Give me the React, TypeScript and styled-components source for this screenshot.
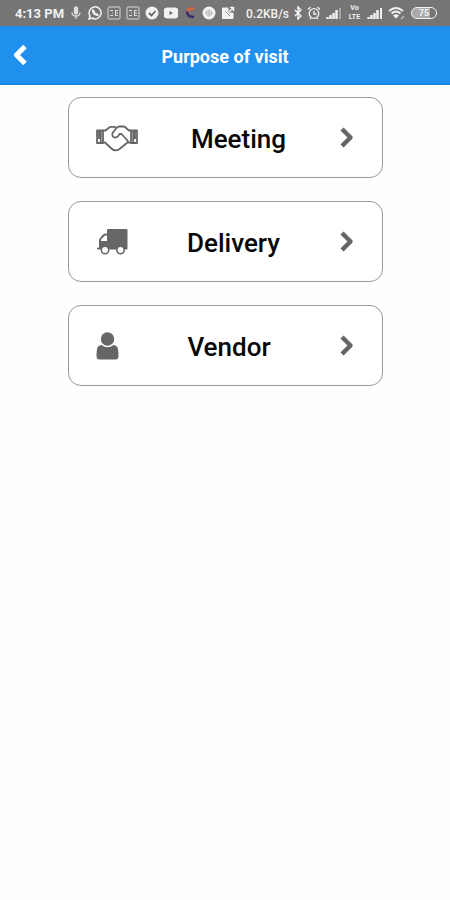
import React from "react";
import styled, { createGlobalStyle } from "styled-components";

const Global = createGlobalStyle`
  * { box-sizing: border-box; }
  body { margin: 0; background: #fefefe; font-family: Roboto, "Liberation Sans", sans-serif; }
`;

const StatusBar = styled.div`
  display: flex;
  align-items: center;
  justify-content: space-between;
  height: 26px;
  padding: 0 13px 0 15px;
  background: #757575;
  color: #f2f2f2;
  white-space: nowrap;
`;

const StatusGroup = styled.div<{ $gap: number }>`
  display: flex;
  align-items: center;
  gap: ${(p) => p.$gap}px;
`;

const StatusText = styled.span<{ $size: number; $weight: number }>`
  padding-top: 1px;
  font-size: ${(p) => p.$size}px;
  font-weight: ${(p) => p.$weight};
  line-height: 16px;
`;

const Glyph = styled.svg`
  display: block;
  flex: none;
  fill: none;
  stroke: currentColor;
`;

const VolteBadge = styled.span`
  display: flex;
  flex-direction: column;
  width: 15px;
  font-size: 7px;
  font-weight: 700;
  line-height: 9px;
  text-align: center;
`;

const Battery = styled.span`
  width: 26px;
  height: 12px;
  border: 1px solid #f2f2f2;
  border-radius: 6px;
  background: linear-gradient(to right, #aaa 75%, #757575 75%);
  font-size: 9px;
  font-weight: 700;
  line-height: 10px;
  text-align: center;
`;

const Header = styled.header`
  display: grid;
  grid-template-columns: 40px 1fr 40px;
  align-items: center;
  height: 59px;
  background: #1f90ee;
  border-bottom: 1px solid #1580dc;
  color: #fff;
`;

const BackButton = styled.button`
  display: flex;
  justify-content: center;
  padding: 8px 0;
  border: 0;
  background: none;
  color: inherit;
  cursor: pointer;
`;

const Title = styled.h1`
  margin: 0;
  padding-top: 3px;
  font-size: 18px;
  font-weight: 700;
  line-height: 24px;
  text-align: center;
`;

const Options = styled.main`
  display: flex;
  flex-direction: column;
  gap: 23px;
  width: 70%;
  margin: 12px auto;
`;

const OptionButton = styled.button`
  display: flex;
  align-items: center;
  justify-content: space-between;
  height: 81px;
  padding: 0 28px 0 27px;
  border: 1px solid #999;
  border-radius: 13px;
  background: #fff;
  color: #666;
  font-family: inherit;
  cursor: pointer;
`;

const Label = styled.span`
  padding-top: 2px;
  color: #080808;
  font-size: 26px;
  font-weight: 500;
  line-height: 32px;
`;

const Handshake = () => (
  <Glyph width="42" height="28" viewBox="0 0 42 28" strokeWidth="1.8" strokeLinejoin="round" aria-hidden="true">
    <path d="M1 6.500H7V19H1ZM41 6.500H35V19H41Z" />
    <path d="M3 7V15M4.800 7V18M37.200 7V18M39 7V15" strokeWidth="1.8" />
    <path d="M7 6.500H9.500L13.500 3.300Q14 2.800 15 2.800H18.500L20.500 4L22 3Q22.500 2.500 23.500 2.500H27.500Q28.500 2.500 29 3L33 6.500H35M7 18.500H9L15.500 24.500Q19 28 23.500 25L31.500 18.500H35" />
    <path d="M20.500 4L16.500 9Q15.500 13.500 19.500 13.500Q22 13.500 23.500 10H25.500L31 16Q32.500 17.500 31.500 18.500" />
  </Glyph>
);

const Truck = () => (
  <Glyph width="32" height="28" viewBox="-1 -1 32 28" aria-hidden="true">
    <path
      fill="currentColor"
      stroke="none"
      fillRule="evenodd"
      d="M11 0H29.500Q30.500 0 30.500 1V19.500Q30.500 20.500 29.500 20.500H1Q0 20.500 0 19.500Q0 18.500 2 18.500V11.500Q2 10 3 9L6 5.500Q7 4.500 8.500 4.500H10V1Q10 0 11 0ZM4 12H10V6.500H8.500Q7.800 6.500 7.500 7L4.500 10Q4 10.500 4 11Z"
    />
    <circle cx="8" cy="21" r="3.700" fill="#fff" strokeWidth="1.600" />
    <circle cx="23.500" cy="21" r="3.700" fill="#fff" strokeWidth="1.600" />
  </Glyph>
);

const Person = () => (
  <Glyph width="23" height="28" viewBox="0 0 23 28" aria-hidden="true">
    <g fill="currentColor" stroke="none">
      <circle cx="11.500" cy="7" r="6.700" />
      <path d="M5.500 13Q11.500 17.500 17.500 13Q20.500 13 21.500 15.500Q22.500 18 22.500 24Q22.500 27.500 19.500 27.500H3.500Q0.500 27.500 0.500 24Q0.500 18 1.500 15.500Q2.500 13 5.500 13Z" />
    </g>
  </Glyph>
);

const ChevronRight = () => (
  <Glyph width="14" height="22" viewBox="0 0 14 22" strokeWidth="4.500" strokeLinejoin="round" aria-hidden="true">
    <path d="M2 2L10.500 10.500L2 19" />
  </Glyph>
);

const Signal = ({ strong }: { strong?: boolean }) => (
  <Glyph width="16" height="12" viewBox="0 0 16 12" strokeWidth="2.500" aria-hidden="true">
    <path d="M1.500 12V10M4.500 12V8M7.500 12V6M10.500 12V3" />
    <path d="M14 12V1" strokeWidth="2" opacity={strong ? 1 : 0.4} />
  </Glyph>
);

const CalendarBox = () => (
  <Glyph width="14" height="14" viewBox="0 0 14 14" opacity="0.8" aria-hidden="true">
    <rect x="1" y="1" width="12" height="12" rx="1" />
    <path d="M3 4.500H6M5 7H6M3 9.500H6M8 4.500H11M8 7H11M8 9.500H11M8.500 4V10" />
  </Glyph>
);

const options = [
  { label: "Meeting", Icon: Handshake },
  { label: "Delivery", Icon: Truck },
  { label: "Vendor", Icon: Person },
];

export default function App() {
  return (
    <>
      <Global />
      <StatusBar>
        <StatusGroup $gap={5}>
          <StatusText $size={13} $weight={700}>4:13 PM</StatusText>
          <Glyph width="14" height="14" viewBox="0 0 14 14" strokeWidth="1.300" opacity="0.85" aria-hidden="true">
            <rect x="5.500" y="1" width="3" height="7" rx="1.500" fill="currentColor" />
            <path d="M3 6.500Q3 10 7 10Q11 10 11 6.500M7 10V13" />
          </Glyph>
          <Glyph width="14" height="14" viewBox="0 0 14 14" strokeWidth="1.500" aria-hidden="true">
            <path d="M1 13L2 10A6 6 0 1 1 4 12Z" />
            <path d="M5 4Q4 5 6 8Q9 10 10 9L9 8L8 8.500L6 6L6 5Z" />
          </Glyph>
          <CalendarBox />
          <CalendarBox />
          <Glyph width="14" height="14" viewBox="0 0 14 14" strokeWidth="1.800" aria-hidden="true">
            <circle cx="7" cy="7" r="6.500" fill="currentColor" stroke="none" />
            <path d="M4 7L6.500 9.500L10.500 5" stroke="#666" />
          </Glyph>
          <Glyph width="14" height="12" viewBox="0 0 14 12" stroke="none" aria-hidden="true">
            <rect x="0" y="1" width="14" height="10" rx="3" fill="currentColor" />
            <path d="M5.500 4L9 6L5.500 8Z" fill="#666" stroke="none" />
          </Glyph>
          <Glyph width="14" height="14" viewBox="0 0 14 14" strokeWidth="2.500" aria-hidden="true">
            <path d="M11 3Q6 1 4 6" stroke="#e2603a" />
            <path d="M4 5.500Q4 11 11 11" stroke="#3b2b6b" />
          </Glyph>
          <Glyph width="14" height="14" viewBox="0 0 14 14" aria-hidden="true">
            <circle cx="7" cy="7" r="6.500" fill="currentColor" stroke="none" />
            <path d="M3 7H11M7 3V11M4.500 5H9.500V9H4.500Z" stroke="#bbb" />
          </Glyph>
          <Glyph width="14" height="14" viewBox="0 0 14 14" aria-hidden="true">
            <path d="M1.500 2H7V7H12V12.500H1.500Z" fill="currentColor" />
            <path d="M8 6L12 2M9 1.500H12.500V5" strokeWidth="1.500" />
            <path d="M4 5L9 10" stroke="#999" />
          </Glyph>
        </StatusGroup>
        <StatusGroup $gap={5}>
          <StatusText $size={12} $weight={500}>0.2KB/s</StatusText>
          <Glyph width="8" height="14" viewBox="0 0 8 14" strokeWidth="1.500" aria-hidden="true">
            <path d="M1 4L7 10L4 13V1L7 4L1 10" />
          </Glyph>
          <Glyph width="14" height="14" viewBox="0 0 14 14" strokeWidth="1.300" aria-hidden="true">
            <circle cx="7" cy="7.500" r="4.800" />
            <path d="M7 5V8H9.500M1 3.500L3.500 1M13 3.500L10.500 1M3 13L4 12M11 13L10 12" />
          </Glyph>
          <Signal />
          <VolteBadge>
            <span>Vo</span>
            <span>LTE</span>
          </VolteBadge>
          <Signal strong />
          <Glyph width="18" height="14" viewBox="0 0 18 14" strokeWidth="1.900" aria-hidden="true">
            <path d="M1 5Q8 -1 15 5M3.500 7.500Q8 3.500 12.500 7.500" />
            <path d="M5 9.500Q8 7 11 9.500L8 12.500Z" fill="currentColor" stroke="none" />
            <path d="M13 13L16 10" strokeWidth="1.500" opacity="0.6" />
          </Glyph>
          <Battery>75</Battery>
        </StatusGroup>
      </StatusBar>
      <Header>
        <BackButton aria-label="Back">
          <Glyph width="14" height="22" viewBox="0 0 14 22" strokeWidth="5" strokeLinejoin="round" aria-hidden="true">
            <path d="M12 2.500L3.500 11L12 19.500" />
          </Glyph>
        </BackButton>
        <Title>Purpose of visit</Title>
      </Header>
      <Options>
        {options.map(({ label, Icon }) => (
          <OptionButton key={label}>
            <Icon />
            <Label>{label}</Label>
            <ChevronRight />
          </OptionButton>
        ))}
      </Options>
    </>
  );
}
